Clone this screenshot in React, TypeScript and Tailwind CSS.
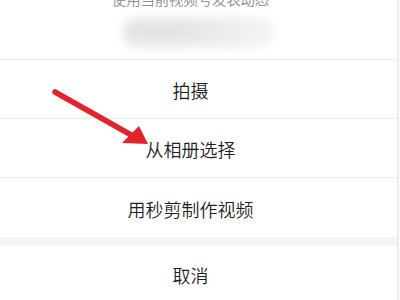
import React from "react";

const options = ["拍摄", "从相册选择", "用秒剪制作视频"];

function Arrow() {
  return (
    <svg
      className="absolute left-0 top-0 pointer-events-none"
      width="400"
      height="300"
      viewBox="0 0 400 300"
    >
      <line
        x1="55"
        y1="92"
        x2="133"
        y2="136"
        stroke="#e3232b"
        strokeWidth="5.5"
        strokeLinecap="round"
      />
      <polygon points="148,144 139,126 122,143" fill="#e3232b" />
    </svg>
  );
}

export default function App() {
  return (
    <div
      className="relative w-[400px] h-[300px] overflow-hidden bg-white flex"
      style={{ fontFamily: '"Noto Sans CJK SC", "Noto Sans", sans-serif' }}
    >
      <div className="flex flex-col w-[397px] shrink-0">
        {/* header */}
        <div className="h-[60px] flex flex-col items-center pr-[16px] border-b border-[#ededed] shrink-0">
          <div className="-mt-[11px] text-[14.5px] leading-[20px] font-[350] text-[#8c8c8c] tracking-[-0.2px]">
            使用当前视频号发表动态
          </div>
          <div className="mt-[7px] ml-[14px] w-[150px] h-[34px] rounded-[14px] bg-[radial-gradient(ellipse_at_25%_45%,#dedede_0%,#e8e8e8_30%,#f1f1f1_60%,#fbfbfb_100%)] blur-[4px]" />
        </div>

        {options.map((label, i) => (
          <div
            key={label}
            className={`h-[59px] shrink-0 flex items-center justify-center pr-[16px] text-[18px] font-[350] text-[#1f1f1f] ${
              i < options.length - 1 ? "border-b border-[#ededed]" : ""
            }`}
          >
            <span className="pt-[3px]">{label}</span>
          </div>
        ))}

        <div className="h-[9px] bg-[#f4f4f4] shrink-0" />

        <div className="h-[58px] shrink-0 flex items-center justify-center pr-[16px] text-[18px] font-[350] text-[#1f1f1f]">
          <span className="pt-[1px]">取消</span>
        </div>
      </div>
      <div className="w-[2px] bg-[#ececec] shrink-0" />
      <div className="flex-1 bg-white" />
      <Arrow />
    </div>
  );
}
